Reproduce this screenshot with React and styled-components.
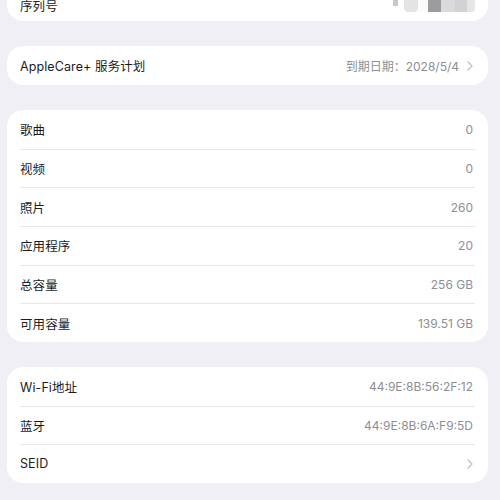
import styled, { createGlobalStyle } from 'styled-components';

const Global = createGlobalStyle`
  html, body {
    margin: 0;
    padding: 0;
    background: #f0eff5;
    font-family: Inter, "Noto Sans CJK SC", sans-serif;
    -webkit-font-smoothing: antialiased;
  }
`;

const Page = styled.div`
  width: 500px;
  height: 500px;
  overflow: hidden;
  background: #f0eff5;
`;

const List = styled.div`
  display: flex;
  flex-direction: column;
  gap: 25px;
  margin-top: -18px;
  padding: 0 12px 0 7px;
`;

const Card = styled.div`
  background: #fff;
  border-radius: 16px;
  overflow: hidden;
`;

const Row = styled.div`
  display: flex;
  align-items: center;
  justify-content: space-between;
  height: ${p => p.$h || 38.7}px;
  margin: 0 13px;
  box-sizing: border-box;
  border-top: ${p => (p.$first ? 'none' : '1px solid #e8e8ec')};
`;

const Label = styled.span`
  font-size: 12.5px;
  color: #1c1c1e;
  letter-spacing: 0.1px;
`;

const Value = styled.span`
  display: flex;
  align-items: center;
  gap: 8px;
  font-size: 12px;
  color: #8e8e93;
  padding-right: 2px;
`;

const Chevron = styled.svg`
  width: 6px;
  height: 10px;
  flex-shrink: 0;
`;

const Blur = styled.div`
  align-self: flex-start;
  display: flex;
  align-items: flex-start;
  margin-top: 18px;
  filter: blur(0.7px);
`;

const Block = styled.span`
  display: block;
  width: ${p => p.$w}px;
  height: ${p => p.$hh || 12}px;
  background: ${p => p.$c};
  border-radius: ${p => p.$r || '0'};
`;

function Arrow() {
  return (
    <Chevron viewBox="0 0 6 10">
      <path d="M1 1l4 4-4 4" fill="none" stroke="#c4c4c8" strokeWidth="1.4" strokeLinecap="round" strokeLinejoin="round" />
    </Chevron>
  );
}

const storage = [
  ['歌曲', '0'],
  ['视频', '0'],
  ['照片', '260'],
  ['应用程序', '20'],
  ['总容量', '256 GB'],
  ['可用容量', '139.51 GB'],
];

const network = [
  ['Wi-Fi地址', '44:9E:8B:56:2F:12'],
  ['蓝牙', '44:9E:8B:6A:F9:5D'],
];

export default function App() {
  return (
    <Page>
      <Global />
      <List>
        <Card>
          <Row $first $h={39}>
            <Label style={{ marginTop: 8 }}>序列号</Label>
            <Blur>
              <Block $w={5} $hh={6} $c="#c8c8cc" />
              <Block $w={6} $c="#ffffff" />
              <Block $w={14} $c="#e4e4e6" $r="0 0 4px 4px" />
              <Block $w={10} $c="#fbfbfb" />
              <Block $w={13} $c="#9c9c9e" />
              <Block $w={14} $c="#dadadc" />
              <Block $w={12} $c="#d2d2d4" />
              <Block $w={8} $c="#e6e6e8" $r="0 0 4px 0" />
            </Blur>
          </Row>
        </Card>
        <Card>
          <Row $first $h={39}>
            <Label>AppleCare+ 服务计划</Label>
            <Value>到期日期：2028/5/4<Arrow /></Value>
          </Row>
        </Card>
        <Card>
          {storage.map(([l, v], i) => (
            <Row key={l} $first={i === 0}>
              <Label>{l}</Label>
              <Value>{v}</Value>
            </Row>
          ))}
        </Card>
        <Card>
          {network.map(([l, v], i) => (
            <Row key={l} $first={i === 0} $h={38.5}>
              <Label>{l}</Label>
              <Value>{v}</Value>
            </Row>
          ))}
          <Row $h={38.5}>
            <Label>SEID</Label>
            <Value><Arrow /></Value>
          </Row>
        </Card>
      </List>
    </Page>
  );
}
